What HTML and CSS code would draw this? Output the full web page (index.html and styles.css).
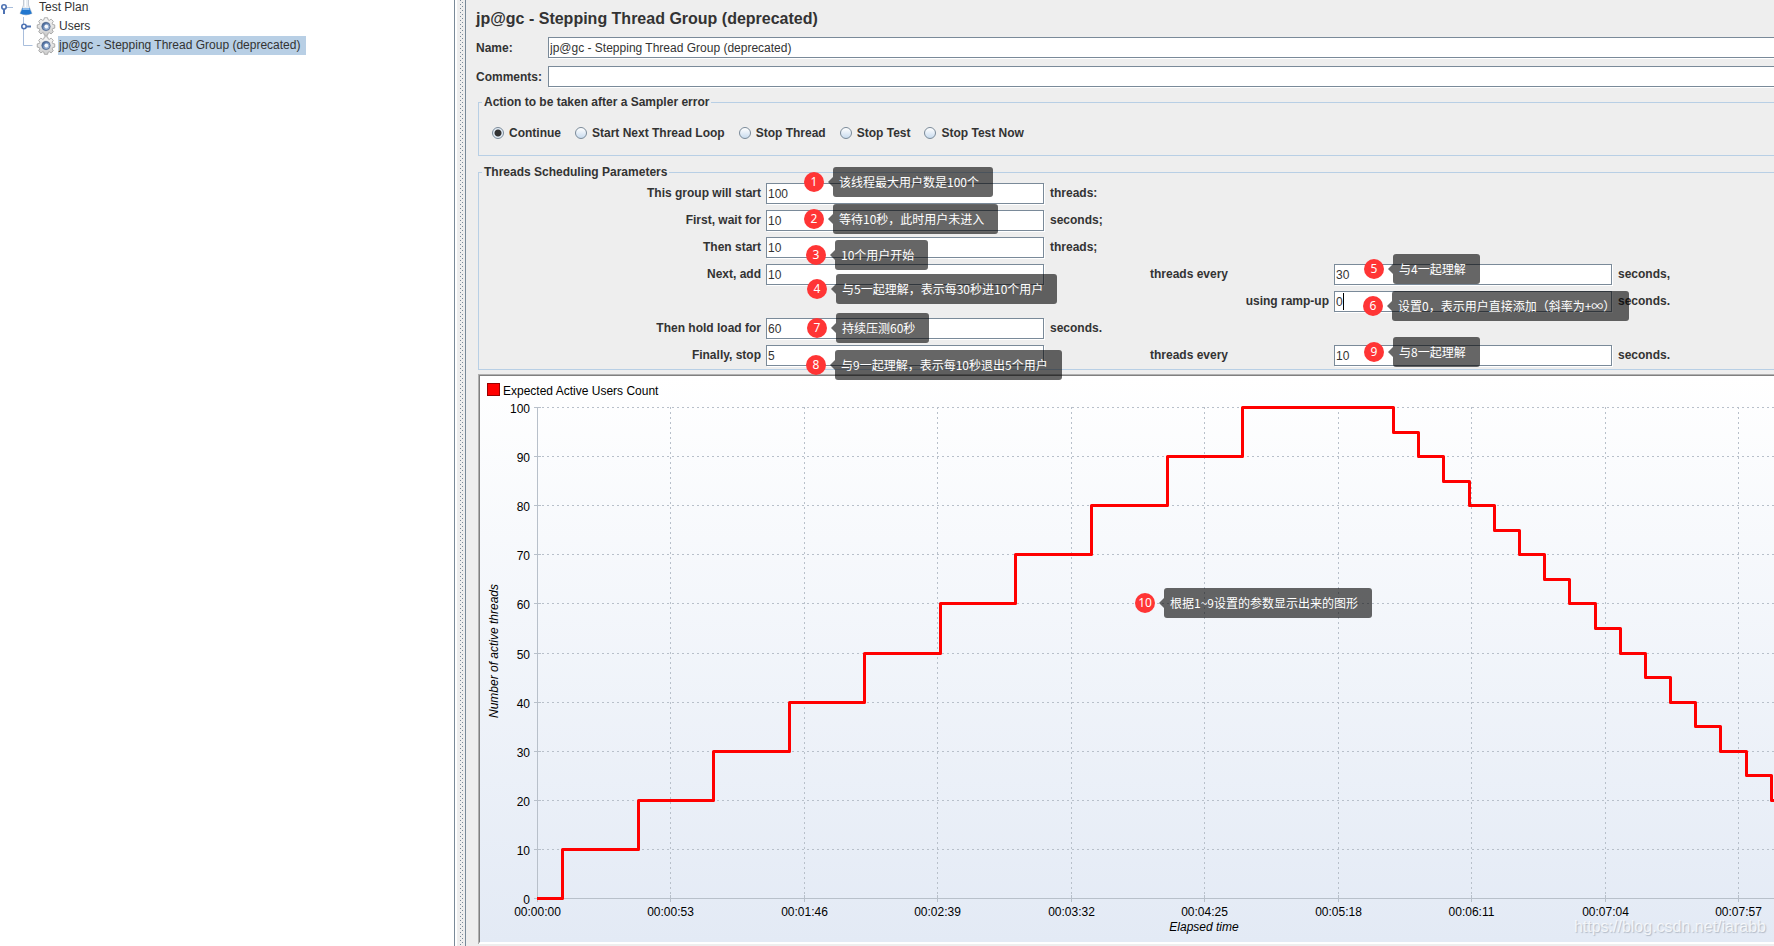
FILE: index.html
```html
<!DOCTYPE html>
<html lang="en">
<head>
<meta charset="utf-8">
<title>jp@gc - Stepping Thread Group</title>
<link rel="stylesheet" href="styles.css">
</head>
<body>
<svg class="defs" aria-hidden="true">
  <defs>
    <linearGradient id="ball" x1="0" y1="0" x2="1" y2="1"><stop offset="0" stop-color="#2f5288"/><stop offset=".5" stop-color="#7f9cc6"/><stop offset="1" stop-color="#c9daf0"/></linearGradient>
    <linearGradient id="metal" x1="0" y1="0" x2="0" y2="1"><stop offset="0" stop-color="#f8f8f8"/><stop offset="1" stop-color="#cdcdcd"/></linearGradient>
    <symbol id="gear" viewBox="0 0 20 20">
      <path d="M8.3 .8h3.400l.5 2.200 1.300.5 1.900-1.200 2.300 2.300-1.200 1.900.5 1.400 2.200.4v3.400l-2.200.5-.5 1.400 1.200 1.900-2.300 2.300-1.900-1.200-1.300.5-.5 2.200H8.300l-.5-2.200-1.300-.5-1.900 1.200-2.300-2.300 1.200-1.900-.5-1.400L.8 11.700V8.300l2.200-.4.5-1.400-1.200-1.900 2.300-2.300 1.900 1.200 1.300-.5z" fill="url(#metal)" stroke="#a0a0a0" stroke-width=".9"/>
      <circle cx="10" cy="10" r="5" fill="#a9b2c0"/>
      <circle cx="10" cy="10" r="4.200" fill="url(#ball)" stroke="#48608a" stroke-width=".8"/>
      <circle cx="10.300" cy="10" r="2" fill="#f5f8fc"/>
    </symbol>
  </defs>
</svg>
<div class="app">
  <nav class="tree" aria-label="Test plan tree">
    <div class="node root">
      <svg class="handle" width="16" height="19" aria-hidden="true"><path d="M6 7.500h7" stroke="#a9bedc"/><path d="M4 8v6" stroke="#4d72b3" stroke-width="2"/><circle cx="4" cy="7" r="2.200" fill="#fff" stroke="#4d72b3" stroke-width="1.600"/></svg>
      <svg class="flask" width="16" height="19" aria-hidden="true"><path d="M5.500 0v6L2 14.500Q8 17.500 14 14.500L10.500 6V0z" fill="#e8edf2" stroke="#b6bfc9" stroke-width=".8"/><path d="M4.500 9h7l2.300 5.500Q8 17 2.200 14.500z" fill="#2277cf"/><path d="M5 9h6l.6 2H4.300z" fill="#8fbdec"/><path d="M7.500 1v7" stroke="#fff"/></svg>
      <span class="name">Test Plan</span>
    </div>
    <div class="node child">
      <svg class="branch" width="16" height="19" aria-hidden="true"><path d="M2.500 0v19" stroke="#a9bedc"/><path d="M4 9.500h6" stroke="#4d72b3" stroke-width="2"/><circle cx="3" cy="9.500" r="2.200" fill="#fff" stroke="#4d72b3" stroke-width="1.600"/></svg>
      <svg class="gear" width="20" height="19" aria-hidden="true"><use href="#gear"/></svg>
      <span class="name">Users</span>
    </div>
    <div class="node child">
      <svg class="branch" width="16" height="19" aria-hidden="true"><path d="M2.500 0v9.500h9" fill="none" stroke="#a9bedc"/></svg>
      <svg class="gear" width="20" height="19" aria-hidden="true"><use href="#gear"/></svg>
      <span class="name selected">jp@gc - Stepping Thread Group (deprecated)</span>
    </div>
  </nav>
  <div class="divider"></div>
  <main class="panel">
    <h1>jp@gc - Stepping Thread Group (deprecated)</h1>
    <div class="line"><label for="name">Name:</label><input id="name" type="text" value="jp@gc - Stepping Thread Group (deprecated)"></div>
    <div class="line"><label for="comments">Comments:</label><input id="comments" type="text"></div>

    <fieldset class="box actions">
      <legend>Action to be taken after a Sampler error</legend>
      <div class="radios">
        <label><input type="radio" name="onerror" checked>Continue</label>
        <label><input type="radio" name="onerror">Start Next Thread Loop</label>
        <label><input type="radio" name="onerror">Stop Thread</label>
        <label><input type="radio" name="onerror">Stop Test</label>
        <label><input type="radio" name="onerror">Stop Test Now</label>
      </div>
    </fieldset>

    <fieldset class="box schedule">
      <legend>Threads Scheduling Parameters</legend>
      <div class="grid">
        <label class="lead" for="f1">This group will start</label><input id="f1" type="text" value="100"><span class="unit">threads:</span>
        <label class="lead" for="f2">First, wait for</label><input id="f2" type="text" value="10"><span class="unit">seconds;</span>
        <label class="lead" for="f3">Then start</label><input id="f3" type="text" value="10"><span class="unit">threads;</span>
        <label class="lead" for="f4">Next, add</label><input id="f4" type="text" value="10"><label class="every" for="f5">threads every</label><input id="f5" class="second" type="text" value="30"><span class="tail">seconds,</span>
        <label class="ramp" for="f6">using ramp-up</label><span class="field second"><input id="f6" type="text" value="0"><i class="caret"></i></span><span class="tail">seconds.</span>
        <label class="lead" for="f7">Then hold load for</label><input id="f7" type="text" value="60"><span class="unit">seconds.</span>
        <label class="lead" for="f8">Finally, stop</label><input id="f8" type="text" value="5"><label class="every" for="f9">threads every</label><input id="f9" class="second" type="text" value="10"><span class="tail">seconds.</span>
      </div>
    </fieldset>

    <section class="chart">
      <svg id="plot" role="img" aria-label="Expected Active Users Count"></svg>
      <span class="watermark">https://blog.csdn.net/iarabb</span>
    </section>
  </main>

  <div class="note n1"><b>1</b><span>该线程最大用户数是100个</span></div>
  <div class="note n2"><b>2</b><span>等待10秒，此时用户未进入</span></div>
  <div class="note n3"><b>3</b><span>10个用户开始</span></div>
  <div class="note n4"><b>4</b><span>与5一起理解，表示每30秒进10个用户</span></div>
  <div class="note n5"><b>5</b><span>与4一起理解</span></div>
  <div class="note n6"><b>6</b><span>设置0，表示用户直接添加（斜率为+∞）</span></div>
  <div class="note n7"><b>7</b><span>持续压测60秒</span></div>
  <div class="note n8"><b>8</b><span>与9一起理解，表示每10秒退出5个用户</span></div>
  <div class="note n9"><b>9</b><span>与8一起理解</span></div>
  <div class="note n10"><b>10</b><span>根据1~9设置的参数显示出来的图形</span></div>
</div>
<script src="chart.js"></script>
</body>
</html>
```
FILE: styles.css
```css
* { box-sizing: border-box; }
body {
  margin: 0;
  background: #eee;
  color: #333;
  font: 12px/19px "Liberation Sans", Arial, sans-serif;
}
.defs { position: absolute; width: 0; height: 0; }
.app { position: relative; display: flex; min-height: 100vh; overflow: hidden; }

.tree { width: 455px; flex: none; background: #fff; border-right: 1px solid #7a8a99; overflow: hidden; }
.node { display: flex; height: 19px; white-space: nowrap; }
.node svg { flex: none; }
.root { margin-top: -2px; }
.handle { margin-top: 2px; }
.flask { margin: 1px 4px 0 2px; }
.root .name { padding: 0 1px; }
.child { padding-left: 21px; }
.gear { margin: 0 2px 0 -1px; }
.child .name { padding: 0 6px 0 1px; }
.selected { background: #b8cfe5; }

.divider {
  width: 11px;
  flex: none;
  padding-left: 2px;
  border-left: 2px solid #fff;
  border-right: 1px solid #7a8a99;
  background: #eee;
}
.divider::before {
  content: "";
  display: block;
  width: 4px;
  height: 100%;
  background:
    conic-gradient(from 270deg at 1px 1px, #7a8a99 90deg, transparent 0) 1px 0 / 4px 4px,
    conic-gradient(from 270deg at 1px 1px, #7a8a99 90deg, transparent 0) 3px 2px / 4px 4px;
}

.panel { flex: 1; min-width: 0; padding: 8px 0 2px 10px; font-weight: bold; }
h1 { margin: 0 0 8px; font-size: 16px; line-height: 21px; }
.line { display: flex; height: 21px; margin-bottom: 8px; }
.line label { width: 72px; flex: none; line-height: 22px; }
input[type="text"] {
  width: 100%;
  height: 21px;
  margin: 0;
  padding: 0 1px;
  border: 1px solid #7a8a99;
  border-radius: 0;
  background: #fff;
  box-shadow: 1px 1px 0 #fff;
  color: #333;
  font: 12px "Liberation Sans", Arial, sans-serif;
  outline: 0;
}
.line input { border-right: 0; }

.box { margin: 0 0 0 2px; padding: 0; border: 1px solid #b8cfe5; border-right: 0; min-width: 0; }
.box legend { margin-left: 3px; padding: 0 2px; line-height: 15px; }
.actions { margin-bottom: 9px; }
.radios { display: flex; gap: 14px; padding: 13px 13px 12px; }
.radios label { display: flex; align-items: center; gap: 5px; height: 20px; white-space: nowrap; }
.radios input {
  appearance: none;
  width: 12px;
  height: 12px;
  margin: 0;
  border: 1px solid #7a8a99;
  border-radius: 50%;
  background: linear-gradient(#fff, #c8dbee);
}
.radios input:checked { background: radial-gradient(circle, #333 0 3px, #e3edf7 4px); }

.grid {
  display: grid;
  grid-template-columns: 282px 278px 106px 184px 278px 1fr;
  grid-auto-rows: 21px;
  row-gap: 6px;
  padding: 3px 0 3px 5px;
  line-height: 21px;
  white-space: nowrap;
}
.lead { grid-column: 1; text-align: right; padding-right: 5px; }
.unit { grid-column: 3; padding-left: 6px; }
.every { grid-column: 4; }
.ramp { grid-column: 4; text-align: right; padding-right: 5px; }
.second { grid-column: 5; }
.tail { grid-column: 6; padding-left: 6px; }
.field { position: relative; }
.caret { position: absolute; left: 9px; top: 2px; width: 1px; height: 17px; background: #000; }

.chart {
  position: relative;
  margin: 4px 0 0 2px;
  border: 2px solid #808080;
  border-right: 0;
  border-bottom-color: #fff;
  background: linear-gradient(#fff, #e3eaf5);
  box-shadow: inset 0 0 0 0 #fff;
}
.chart::before { content: ""; position: absolute; inset: -2px 0 -2px -2px; border: 1px solid #b0b0b0; border-width: 1px 0 0 1px; pointer-events: none; }
#plot { display: block; width: 100%; height: 566px; overflow: hidden; font: 12px "Liberation Sans", Arial, sans-serif; }
.watermark {
  position: absolute;
  right: 8px;
  bottom: 4px;
  color: rgba(255, 255, 255, .75);
  font: 16px/22px "Liberation Sans", Arial, sans-serif;
  text-shadow: 1px 1px 1px rgba(120, 130, 145, .45);
}

.note { position: absolute; display: flex; align-items: center; gap: 9px; color: #fff; font: 12px/30px "Noto Sans CJK SC", sans-serif; white-space: nowrap; }
.note b { width: 20px; height: 20px; border-radius: 50%; background: #ff3535; font-family: "Noto Sans", sans-serif; font-weight: normal; line-height: 20px; text-align: center; }
.note span { position: relative; height: 30px; padding: 0 14px 0 6px; border-radius: 3px; background: rgba(0, 0, 0, .6); line-height: 29px; }
.note span::before { content: ""; position: absolute; left: -5px; top: 10px; border: 5px solid transparent; border-left: 0; border-right-color: rgba(0, 0, 0, .6); }
.n1 { left: 804px; top: 167px; }
.n2 { left: 804px; top: 204px; }
.n3 { left: 806px; top: 240px; }
.n4 { left: 807px; top: 274px; }
.n5 { left: 1364px; top: 254px; }
.n6 { left: 1363px; top: 291px; }
.n7 { left: 807px; top: 313px; }
.n8 { left: 806px; top: 350px; }
.n9 { left: 1364px; top: 337px; }
.n10 { left: 1135px; top: 588px; }
```
FILE: chart.js
```js
const NS = 'http://www.w3.org/2000/svg';
const plot = document.getElementById('plot');
const X0 = 57, Y0 = 522, PX_PER_SECOND = 2.518, PX_PER_THREAD = 4.91;

function add(name, attrs, text) {
  const el = document.createElementNS(NS, name);
  for (const key in attrs) el.setAttribute(key, attrs[key]);
  if (text) el.textContent = text;
  plot.appendChild(el);
}
const xOf = s => Math.round(X0 + s * PX_PER_SECOND);
const yOf = n => Math.round(Y0 - n * PX_PER_THREAD);
const clock = s => '00:' + String(Math.floor(s / 60)).padStart(2, '0') + ':' + String(s % 60).padStart(2, '0');

const grid = { stroke: '#b8c0ca', 'stroke-dasharray': '2 3' };
const solid = { stroke: '#b8c0ca' };

add('rect', { x: 7.5, y: 7.5, width: 12, height: 12, fill: '#f00', stroke: '#900' });
add('text', { x: 23, y: 19 }, 'Expected Active Users Count');

for (let n = 0; n <= 100; n += 10) {
  const y = yOf(n) + 0.5;
  if (n) add('line', { x1: X0, x2: '100%', y1: y, y2: y, ...grid });
  add('line', { x1: X0 - 3, x2: X0 + 4, y1: y, y2: y, ...solid });
  add('text', { x: X0 - 7, y: y + 5, 'text-anchor': 'end' }, String(n));
}
for (let s = 0; s <= 477; s += 53) {
  const x = xOf(s) + 0.5;
  if (s) add('line', { x1: x, x2: x, y1: yOf(100), y2: Y0, ...grid });
  add('line', { x1: x, x2: x, y1: Y0 - 3, y2: Y0 + 4, ...solid });
  add('text', { x: x, y: Y0 + 18, 'text-anchor': 'middle' }, clock(s));
}
add('line', { x1: X0 + 0.5, x2: X0 + 0.5, y1: yOf(100), y2: Y0, ...solid });
add('line', { x1: X0, x2: '100%', y1: Y0 + 0.5, y2: Y0 + 0.5, ...solid });

let path = `M${X0} ${Y0 + 0.5}`;
let time = 10;
for (let n = 10; n <= 100; n += 10) {
  path += `H${xOf(time) + 0.5}V${yOf(n) + 0.5}`;
  time += 30;
}
time += 30;
for (let n = 95; n >= 0; n -= 5) {
  path += `H${xOf(time) + 0.5}V${yOf(n) + 0.5}`;
  time += 10;
}
add('path', { d: path, fill: 'none', stroke: '#f00', 'stroke-width': 3, 'stroke-linejoin': 'round' });

add('text', { x: 724, y: 555, 'text-anchor': 'middle', 'font-style': 'italic' }, 'Elapsed time');
add('text', { transform: 'translate(18 275) rotate(-90)', 'text-anchor': 'middle', 'font-style': 'italic' }, 'Number of active threads');
```
